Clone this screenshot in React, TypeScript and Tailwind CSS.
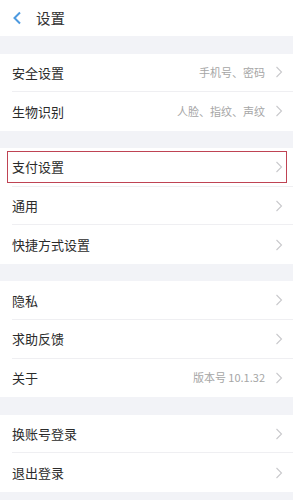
import React from "react";

type Row = { label: string; value?: string; highlight?: boolean };

const groups: Row[][] = [
  [
    { label: "安全设置", value: "手机号、密码" },
    { label: "生物识别", value: "人脸、指纹、声纹" },
  ],
  [
    { label: "支付设置", highlight: true },
    { label: "通用" },
    { label: "快捷方式设置" },
  ],
  [
    { label: "隐私" },
    { label: "求助反馈" },
    { label: "关于", value: "版本号 10.1.32" },
  ],
  [{ label: "换账号登录" }, { label: "退出登录" }],
];

function Chevron() {
  return (
    <svg width="8" height="12" viewBox="0 0 8 12" className="shrink-0">
      <polyline points="1.5,1 6.5,6 1.5,11" fill="none" stroke="#c9c9cc" strokeWidth="1.1" />
    </svg>
  );
}

export default function App() {
  return (
    <div
      className="w-[293px] h-[500px] overflow-hidden bg-[#f2f3f7]"
      style={{ fontFamily: '"Noto Sans CJK SC", "Noto Sans", sans-serif' }}
    >
      <div className="h-[36px] bg-white flex items-center">
        <svg width="10" height="14" viewBox="0 0 10 14" className="ml-[12px]">
          <polyline points="8,1.5 2.5,7 8,12.5" fill="none" stroke="#4d9ae0" strokeWidth="2" />
        </svg>
        <span className="ml-[14px] text-[14.5px] text-[#333] leading-none">设置</span>
      </div>
      {groups.map((g, gi) => (
        <div key={gi} className="mt-[17.5px] bg-white">
          {g.map((r, ri) => (
            <div key={ri} className="relative h-[38.6px] flex pl-[12px]">
              <div
                className={
                  "flex-1 flex items-center pr-[10px] " +
                  (ri < g.length - 1 ? "border-b border-[#efeff2]" : "")
                }
              >
                <span className="text-[13px] text-[#2b2b2b] leading-none">{r.label}</span>
                <span className="ml-auto mr-[10px] text-[11px] text-[#a6a6a6] leading-none">
                  {r.value ?? ""}
                </span>
                <Chevron />
              </div>
              {r.highlight && (
                <div className="absolute left-[7px] right-[6px] top-[3px] bottom-[4px] border-[1.5px] border-[#bf4353]" />
              )}
            </div>
          ))}
        </div>
      ))}
    </div>
  );
}
